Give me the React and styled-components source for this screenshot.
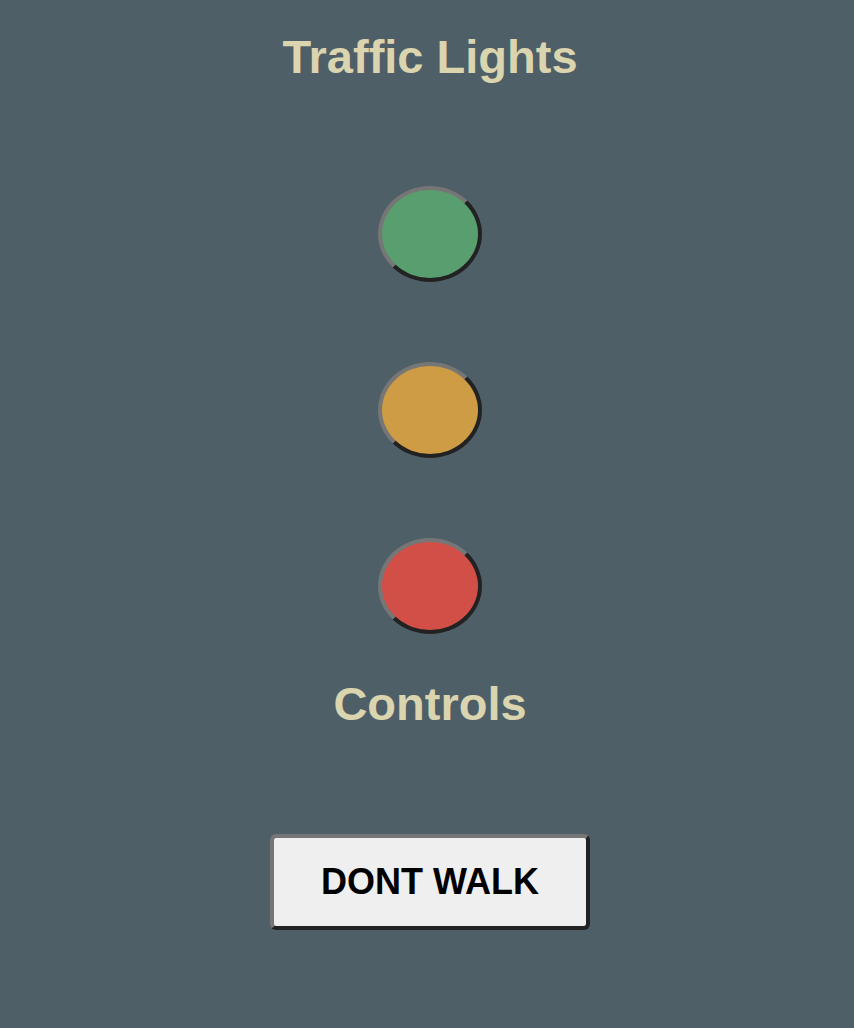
import React, { useState } from 'react';
import styled, { createGlobalStyle } from 'styled-components';

const GlobalStyle = createGlobalStyle`
  html, body {
    margin: 0;
    padding: 0;
    background-color: #4f5f68;
  }
  body {
    min-height: 1028px;
  }
`;

const Page = styled.main`
  display: flex;
  flex-direction: column;
  align-items: center;
  padding: 30px 0 0 6px;
  font-family: 'Liberation Sans', Arial, Helvetica, sans-serif;
`;

const Heading = styled.h1`
  margin: 0;
  color: #dad5af;
  font-size: 47px;
  line-height: 54px;
  font-weight: 700;
`;

const LightStack = styled.div`
  display: flex;
  flex-direction: column;
  align-items: center;
  gap: 80px;
  margin: 102px 0 43px;
`;

const Light = styled.button`
  box-sizing: border-box;
  width: 104px;
  height: 96px;
  padding: 0;
  border-radius: 50%;
  border: 4px solid;
  border-color: #767676 #222222 #222222 #767676;
  background-color: ${(p) => p.color};
  cursor: pointer;
`;

const ControlButton = styled.button`
  box-sizing: border-box;
  margin-top: 103px;
  width: 320px;
  height: 96px;
  border-radius: 6px;
  border: 4px solid;
  border-color: #767676 #222222 #222222 #767676;
  background-color: #efefef;
  color: #000;
  font-family: 'Liberation Sans', Arial, sans-serif;
  font-weight: 700;
  font-size: 36px;
  cursor: pointer;
`;

const lights = [
  { id: 'green', color: '#589e6f' },
  { id: 'yellow', color: '#cd9c45' },
  { id: 'red', color: '#d24f48' },
];

const App = () => {
  const [walk, setWalk] = useState(false);

  return (
    <>
      <GlobalStyle />
      <Page>
        <Heading>Traffic Lights</Heading>
        <LightStack>
          {lights.map((l) => (
            <Light key={l.id} color={l.color} aria-label={l.id} />
          ))}
        </LightStack>
        <Heading>Controls</Heading>
        <ControlButton onClick={() => setWalk(!walk)}>
          {walk ? 'WALK' : 'DONT WALK'}
        </ControlButton>
      </Page>
    </>
  );
};

export default App;
